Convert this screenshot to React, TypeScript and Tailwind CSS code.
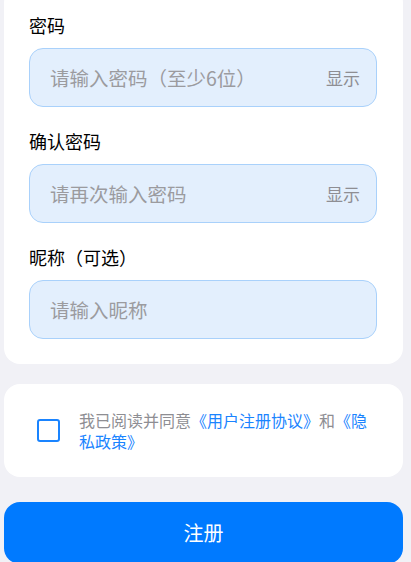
import { useState } from 'react';

const font = { fontFamily: '"Noto Sans CJK SC", "Noto Sans", sans-serif' };

type FieldProps = {
    label: string;
    placeholder: string;
    toggle?: boolean;
};

const Field = ({ label, placeholder, toggle }: FieldProps) => {
    const [show, setShow] = useState(false);
    return (
        <div className="flex flex-col">
            <label className="text-[18px] leading-[26px] text-black mb-[10px]">{label}</label>
            <div className="flex items-center h-[59px] rounded-[14px] border border-[#a9d1fb] bg-[#e3effd] pl-[20px] pr-[16px]">
                <input
                    type={toggle && !show ? 'password' : 'text'}
                    placeholder={placeholder}
                    className="flex-1 min-w-0 bg-transparent outline-none text-[19.5px] text-[#333] placeholder:text-[#9b9b9f]"
                    style={font}
                />
                {toggle && (
                    <button
                        onClick={() => setShow(!show)}
                        className="text-[17px] text-[#8e8e93] shrink-0"
                        style={font}
                    >
                        {show ? '隐藏' : '显示'}
                    </button>
                )}
            </div>
        </div>
    );
};

export default function App() {
    const [agreed, setAgreed] = useState(false);

    return (
        <div className="min-h-[562px] bg-[#f1f1f6] pl-[4px] pr-[8px] overflow-hidden" style={font}>
            <div className="-mt-[13px] bg-white rounded-[16px] pt-[25px] pb-[25px] pl-[25px] pr-[26px] flex flex-col gap-[21px]">
                <Field label="密码" placeholder="请输入密码（至少6位）" toggle />
                <Field label="确认密码" placeholder="请再次输入密码" toggle />
                <Field label="昵称（可选）" placeholder="请输入昵称" />
            </div>

            <div className="mt-[20px] h-[93px] bg-white rounded-[16px] flex items-center pl-[33px] pr-[28px]">
                <button
                    onClick={() => setAgreed(!agreed)}
                    className="w-[23px] h-[23px] shrink-0 rounded-[3px] border-2 border-[#1a84ff] flex items-center justify-center"
                >
                    {agreed && <span className="w-[11px] h-[11px] bg-[#1a84ff] rounded-[1px]" />}
                </button>
                <p className="ml-[19px] text-[16px] leading-[21px] text-[#8e8e93]">
                    我已阅读并同意<span className="text-[#1a84ff]">《用户注册协议》</span>和<span className="text-[#1a84ff]">《隐私政策》</span>
                </p>
            </div>

            <button className="mt-[25px] w-full h-[62px] rounded-[16px] bg-[#007aff] text-white text-[20px]">
                注册
            </button>
        </div>
    );
}
